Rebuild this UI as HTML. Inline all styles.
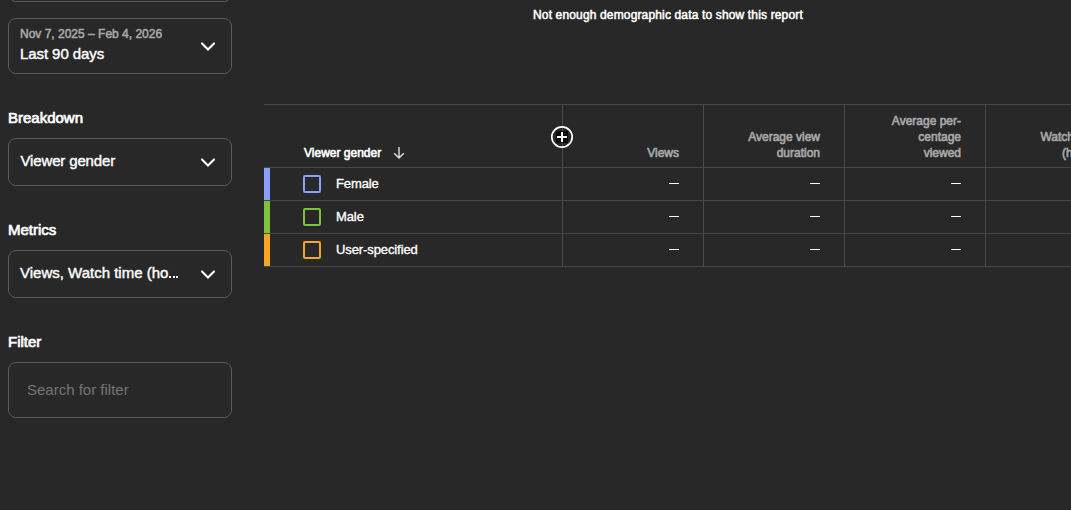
<!DOCTYPE html>
<html><head><meta charset="utf-8">
<style>
html,body{margin:0;padding:0;}
body{width:1071px;height:510px;overflow:hidden;background:#282828;font-family:"Liberation Sans",sans-serif;color:#fff;position:relative;}
.abs{position:absolute;}
.box{position:absolute;left:8px;width:222px;border:1px solid #5a5a5a;border-radius:8px;box-sizing:content-box;}
.lbl{position:absolute;left:8px;font-size:15px;line-height:18px;white-space:nowrap;-webkit-text-stroke:0.7px #fff;}
.chev{position:absolute;left:199px;width:18px;height:10px;}
.t{position:absolute;white-space:nowrap;}
.m{-webkit-text-stroke:0.4px currentColor;}
.hline{position:absolute;left:264px;width:807px;height:1px;background:#474747;}
.vline{position:absolute;width:1px;background:#4b4b4b;}
.bar{position:absolute;left:264px;width:6px;height:32px;}
.cb{position:absolute;left:303px;width:14px;height:14px;border:2px solid;border-radius:2px;}
.name{position:absolute;left:336px;font-size:13px;white-space:nowrap;line-height:16px;letter-spacing:-0.1px;-webkit-text-stroke:0.35px #fff;}
.dash{position:absolute;width:10px;height:1px;background:#fff;}
.hdr{position:absolute;font-size:12px;color:#aaaaaa;text-align:right;line-height:16px;white-space:nowrap;-webkit-text-stroke:0.6px #aaaaaa;}
</style></head><body>
<!-- top partial box -->
<div class="box" style="top:-40px;height:40px;"></div>
<!-- date box -->
<div class="box" style="top:18px;height:54px;"></div>
<div class="t m" style="left:20px;top:27px;font-size:12px;color:#aaaaaa;line-height:14px;-webkit-text-stroke:0.5px #aaaaaa;">Nov 7, 2025 – Feb 4, 2026</div>
<div class="t m" style="left:20px;top:45px;font-size:15px;line-height:18px;letter-spacing:-0.08px;">Last 90 days</div>
<svg class="chev" style="top:41px" viewBox="0 0 18 10"><path d="M3 2.4 L9 8.4 L15 2.4" stroke="#fff" stroke-width="2.1" stroke-linecap="round" fill="none"/></svg>

<div class="lbl" style="top:109px;">Breakdown</div>
<div class="box" style="top:138px;height:46px;"></div>
<div class="t m" style="left:20.5px;top:152px;font-size:15px;line-height:18px;letter-spacing:-0.15px;">Viewer gender</div>
<svg class="chev" style="top:157px" viewBox="0 0 18 10"><path d="M3 2.4 L9 8.4 L15 2.4" stroke="#fff" stroke-width="2.1" stroke-linecap="round" fill="none"/></svg>

<div class="lbl" style="top:221px;">Metrics</div>
<div class="box" style="top:250px;height:46px;"></div>
<div class="t m" style="left:20px;top:264px;font-size:15px;line-height:18px;">Views, Watch time (ho</div>
<div class="abs" style="left:169px;top:276px;width:2px;height:2px;background:#fff;"></div><div class="abs" style="left:172.5px;top:276px;width:2px;height:2px;background:#fff;"></div><div class="abs" style="left:176px;top:276px;width:2px;height:2px;background:#fff;"></div>
<svg class="chev" style="top:269px" viewBox="0 0 18 10"><path d="M3 2.4 L9 8.4 L15 2.4" stroke="#fff" stroke-width="2.1" stroke-linecap="round" fill="none"/></svg>

<div class="lbl" style="top:333px;">Filter</div>
<div class="box" style="top:362px;height:54px;"></div>
<div class="t" style="left:27px;top:381px;font-size:15px;color:#757575;line-height:18px;">Search for filter</div>

<!-- message -->
<div class="t m" style="left:533px;top:7px;font-size:12px;line-height:16px;letter-spacing:0.15px;-webkit-text-stroke:0.5px #fff;">Not enough demographic data to show this report</div>

<!-- table -->
<div class="hline" style="top:104px;"></div>
<div class="hline" style="top:167px;"></div>
<div class="hline" style="top:200px;"></div>
<div class="hline" style="top:233px;"></div>
<div class="hline" style="top:266px;"></div>
<div class="vline" style="left:562px;top:104px;height:163px;"></div>
<div class="vline" style="left:703px;top:104px;height:163px;"></div>
<div class="vline" style="left:844px;top:104px;height:163px;"></div>
<div class="vline" style="left:985px;top:104px;height:163px;"></div>

<div class="hdr" style="left:304px;top:145px;color:#fff;-webkit-text-stroke:0.6px #fff;text-align:left;">Viewer gender</div>
<svg class="abs" style="left:392px;top:145px;width:14px;height:16px;" viewBox="0 0 14 16"><path d="M7 2 V13 M2.2 8.3 L7 13.1 L11.8 8.3" stroke="#ddd" stroke-width="1.4" fill="none"/></svg>

<div class="hdr" style="right:392px;top:145px;">Views</div>
<div class="hdr" style="right:251px;top:129px;">Average view<br>duration</div>
<div class="hdr" style="right:110px;top:113px;">Average per-<br>centage<br>viewed</div>
<div class="hdr" style="right:-29px;top:129px;">Watch time<br>(hours)</div>

<!-- add circle -->
<svg class="abs" style="left:550px;top:125px;width:24px;height:24px;" viewBox="0 0 24 24"><circle cx="12" cy="12" r="10.2" fill="none" stroke="#fff" stroke-width="1.7"/><rect x="6" y="6" width="12" height="12" fill="#0a0a0a"/><path d="M7 12 H17 M12 7 V17" stroke="#fff" stroke-width="2"/></svg>

<div class="bar" style="top:168px;background:#8c9eff;"></div>
<div class="bar" style="top:201px;background:#7cc23f;"></div>
<div class="bar" style="top:234px;background:#f5a623;"></div>
<div class="cb" style="top:175px;border-color:#8c9eff;"></div>
<div class="cb" style="top:208px;border-color:#7cc23f;"></div>
<div class="cb" style="top:241px;border-color:#f5a623;"></div>
<div class="name" style="top:176px;">Female</div>
<div class="name" style="top:209px;">Male</div>
<div class="name" style="top:242px;">User-specified</div>

<div class="dash" style="left:669px;top:183px;"></div>
<div class="dash" style="left:810px;top:183px;"></div>
<div class="dash" style="left:951px;top:183px;"></div>
<div class="dash" style="left:669px;top:216px;"></div>
<div class="dash" style="left:810px;top:216px;"></div>
<div class="dash" style="left:951px;top:216px;"></div>
<div class="dash" style="left:669px;top:249px;"></div>
<div class="dash" style="left:810px;top:249px;"></div>
<div class="dash" style="left:951px;top:249px;"></div>
</body></html>
